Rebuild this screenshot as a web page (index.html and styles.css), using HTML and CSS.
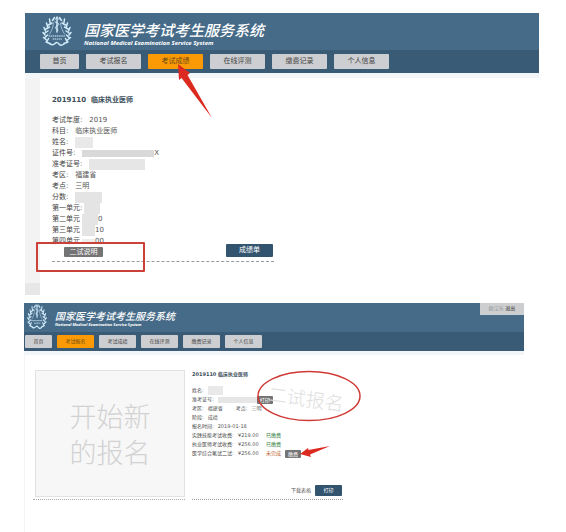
FILE: index.html
```html
<!DOCTYPE html>
<html lang="zh-CN">
<head>
	<meta charset="utf-8">
	<title>国家医学考试考生服务系统</title>
	<link rel="stylesheet" href="styles.css">
</head>
<body>
	<svg class="defs" aria-hidden="true">
		<symbol id="emblem" viewBox="0 0 30 30" preserveAspectRatio="none">
			<g fill="none" stroke="#d3ecfb" stroke-linecap="round">
				<path stroke-width="1.500" d="M12.500 1.500L10.500 4.500M7.500 3L8 6.500M10 7L6.500 9M4.500 7L5.500 10.500M7.500 11L4 13M2 11.500L3.500 15M6 15L3 17M1 16.500L3 19M5.500 19L3 21.500M1.500 21.500L4.500 24M6.500 22.500L5 25.500M4 26L8 27.500"/>
				<path stroke-width="1.500" d="M17.500 1.500L19.500 4.500M22.500 3L22 6.500M20 7L23.500 9M25.500 7L24.500 10.500M22.500 11L26 13M28 11.500L26.500 15M24 15L27 17M29 16.500L27 19M24.500 19L27 21.500M28.500 21.500L25.500 24M23.500 22.500L25 25.500M26 26L22 27.500"/>
				<path stroke-width="1.500" d="M15 1V16"/>
				<path stroke-width="1" d="M13 3.500L15 1.500L17 3.500M13 6C18 7 17.500 9 15 10S13 12.500 16 14"/>
				<path stroke-width="0.600" d="M11.500 7C11 12 9.500 15 7.500 18M18.500 7C19 12 20.500 15 22.500 18"/>
				<path stroke-width="1" stroke-dasharray="0.800 1.300" d="M7 20H23.500M11 23H19.500"/>
				<path stroke-width="1.500" d="M8 28Q11 29.500 13 27.500T17 28T22 28"/>
			</g>
		</symbol>
	</svg>

	<section class="shot shot-score">
		<header class="banner">
			<svg class="logo" role="img" aria-label="徽标"><use href="#emblem"/></svg>
			<div class="brand">
				<div class="brand-name">国家医学考试考生服务系统</div>
				<div class="brand-en">National Medical Examination Service System</div>
			</div>
		</header>
		<nav class="menu">
			<a class="home" href="#">首页</a>
			<a href="#">考试报名</a>
			<a class="active" href="#">考试成绩</a>
			<a href="#">在线评测</a>
			<a href="#">缴费记录</a>
			<a href="#">个人信息</a>
		</nav>
		<div class="content">
			<div class="gutter"></div>
			<div class="record">
				<h2>2019110&nbsp; 临床执业医师</h2>
				<dl>
					<div><dt>考试年度:</dt><dd>2019</dd></div>
					<div><dt>科目:</dt><dd>临床执业医师</dd></div>
					<div><dt>姓名:</dt><dd><span class="mask mask-name"></span></dd></div>
					<div><dt>证件号:</dt><dd><span class="mask mask-id"></span>X</dd></div>
					<div><dt>准考证号:</dt><dd><span class="mask mask-ticket"></span></dd></div>
					<div><dt>考区:</dt><dd>福建省</dd></div>
					<div><dt>考点:</dt><dd>三明</dd></div>
					<div><dt>分数:</dt><dd><span class="mask mask-total"></span></dd></div>
					<div class="unit"><dt>第一单元:</dt><dd><span class="mask"></span></dd></div>
					<div class="unit"><dt>第二单元</dt><dd><span class="mask"></span>0</dd></div>
					<div class="unit"><dt>第三单元</dt><dd><span class="mask mask-short"></span>10</dd></div>
					<div class="unit"><dt>第四单元</dt><dd><span class="mask mask-short mask-faint"></span>00</dd></div>
				</dl>
				<div class="actions">
					<button type="button" class="tag">二试说明</button>
					<button type="button" class="primary">成绩单</button>
				</div>
			</div>
		</div>
		<div class="mark-box"></div>
		<svg class="mark-arrow" viewBox="0 0 36 56" aria-hidden="true">
			<path fill="#dd2a20" d="M1 1L13 10L10.500 12L35 55L4.500 15L2 17Z"/>
		</svg>
	</section>

	<section class="shot shot-apply">
		<header class="banner">
			<svg class="logo" role="img" aria-label="徽标"><use href="#emblem"/></svg>
			<div class="brand">
				<div class="brand-name">国家医学考试考生服务系统</div>
				<div class="brand-en">National Medical Examination Service System</div>
			</div>
			<div class="user"><span class="user-name">欧宝乐</span> <a href="#">退出</a></div>
		</header>
		<nav class="menu">
			<a class="home" href="#">首页</a>
			<a class="active" href="#">考试报名</a>
			<a href="#">考试成绩</a>
			<a href="#">在线评测</a>
			<a href="#">缴费记录</a>
			<a href="#">个人信息</a>
		</nav>
		<div class="content">
			<div class="new-entry">
				<button type="button" class="new-card">开始新<br>的报名</button>
			</div>
			<div class="record">
				<h2>2019110 临床执业医师</h2>
				<dl>
					<div><dt>姓名:</dt><dd><span class="mask mask-name"></span></dd></div>
					<div><dt>准考证号:</dt><dd><span class="mask mask-ticket"></span><button type="button" class="tag">打印</button></dd></div>
					<div><dt>考区:</dt><dd class="area">福建省</dd><dt>考点:</dt><dd>三明</dd></div>
					<div><dt>阶段:</dt><dd>成绩</dd></div>
					<div><dt>报名时间:</dt><dd>2019-01-18</dd></div>
					<div class="fee"><dt>实践技能考试收费:</dt><dd>¥219.00</dd><dd class="paid">已缴费</dd></div>
					<div class="fee"><dt>执业医师考试收费:</dt><dd>¥256.00</dd><dd class="paid">已缴费</dd></div>
					<div class="fee"><dt>医学综合笔试二试:</dt><dd>¥256.00</dd><dd class="unpaid">未完成</dd><dd><button type="button" class="tag">缴费</button></dd></div>
				</dl>
				<div class="actions">
					<a href="#">下载表格</a>
					<button type="button" class="primary">打印</button>
				</div>
			</div>
		</div>
		<div class="stamp">二试报名</div>
		<svg class="mark-ring" viewBox="0 0 104 52" aria-hidden="true">
			<ellipse cx="52" cy="26" rx="51" ry="24.500" fill="none" stroke="#cf3a35" stroke-width="1.500"/>
		</svg>
		<svg class="mark-arrow" viewBox="0 0 32 14" aria-hidden="true">
			<path fill="#dd2a20" d="M1 9L9 3L9.500 5L31 1L11 9.500L12 12Z"/>
		</svg>
	</section>
</body>
</html>
```

FILE: styles.css
```css
* {
	box-sizing: border-box;
}

body {
	margin: 0;
	padding: 13px 0 0;
	background: #fff;
	color: #555;
	font-family: "DejaVu Sans", "Noto Sans CJK SC", sans-serif;
}

a {
	color: inherit;
	text-decoration: none;
}

button {
	margin: 0;
	padding: 0;
	border: 0;
	font: inherit;
	text-align: center;
}

h2, dl, dd {
	margin: 0;
}

.defs {
	display: none;
}

.shot {
	position: relative;
}

.shot-score {
	margin: 0 27px 8px 25px;
	font-size: 7px;
	line-height: 11px;
}

.shot-apply {
	margin: 0 42px 0 24px;
	font-size: 5px;
	line-height: 9px;
}

/* header */
.banner {
	display: flex;
	background: #466b88;
	color: #fff;
}

.shot-score .banner {
	height: 37px;
	padding: 3px 0 0 17px;
	gap: 12px;
}

.shot-apply .banner {
	height: 29px;
	padding: 1px 0 0 3px;
	gap: 8px;
}

.shot-score .logo {
	width: 30px;
	height: 30px;
}

.shot-apply .logo {
	width: 20px;
	height: 25px;
}

.brand {
	font-style: italic;
	white-space: nowrap;
}

.brand-name {
	font-family: "Noto Sans CJK SC", sans-serif;
	font-weight: 500;
}

.brand-en {
	font-family: "Open Sans", sans-serif;
	font-weight: 700;
}

.shot-score .brand-name {
	padding-top: 5px;
	font-size: 15px;
	line-height: 18px;
}

.shot-score .brand-en {
	font-size: 6px;
	line-height: 8px;
}

.shot-apply .brand-name {
	padding-top: 6px;
	font-size: 10px;
	line-height: 12px;
}

.shot-apply .brand-en {
	font-size: 4px;
	line-height: 6px;
}

.user {
	width: 44px;
	height: 12px;
	margin: -1px 0 0 auto;
	background: #ccced0;
	color: #333;
	line-height: 11px;
	text-align: center;
}

.user-name {
	color: #999;
}

/* menu */
.menu {
	display: flex;
	background: #3a5b76;
}

.menu a {
	border-radius: 1px;
	background: #cdced1;
	color: #444;
	text-align: center;
}

.menu .active {
	background: #fb9a05;
	color: #6b4a14;
}

.shot-score .menu {
	gap: 7px;
	padding: 4px 15px;
}

.shot-score .menu a {
	width: 55px;
	line-height: 15px;
}

.shot-score .menu .home {
	width: 39px;
}

.shot-apply .menu {
	gap: 5px;
	padding: 3px 1px;
}

.shot-apply .menu a {
	width: 37px;
	line-height: 13px;
}

.shot-apply .menu .home {
	width: 27px;
}

/* content */
.content {
	display: flex;
	border-top: 5px solid #f3f6f8;
}

.gutter {
	width: 15px;
	border-bottom: 12px solid #e7e7e8;
	background: #f3f3f4;
}

.record {
	display: flex;
	flex-direction: column;
}

.record h2 {
	color: #3d4f5c;
	font-size: inherit;
	font-weight: bold;
}

.record dl > div {
	display: flex;
	white-space: nowrap;
}

.record dt {
	color: #444;
}

.record dd {
	display: flex;
	align-items: center;
}

.shot-score .record {
	width: 222px;
	margin: 17px 0 33px 12px;
	border-bottom: 1px dashed #999;
}

.shot-score dl {
	margin-top: 9px;
}

.shot-score dl > div {
	gap: 7px;
	height: 11px;
}

.shot-score dl > .unit {
	gap: 2px;
}

.actions {
	display: flex;
	align-items: flex-end;
	justify-content: space-between;
}

.shot-score .actions {
	margin-top: -3px;
	padding: 0 1px 4px 12px;
}

.tag {
	border-radius: 1px;
	background: #747474;
	color: #fff;
}

.primary {
	border-radius: 1px;
	background: #32546f;
	color: #fff;
}

.shot-score .tag {
	width: 39px;
	line-height: 10px;
}

.shot-score .primary {
	width: 47px;
	line-height: 13px;
}

/* hidden personal data */
.mask {
	width: 16px;
	height: 11px;
	background: #e4e4e4;
}

.mask-name {
	width: 18px;
	background: #e9e9e9;
}

.mask-id {
	width: 72px;
	height: 7px;
	background: #d9d9d9;
}

.mask-ticket {
	width: 56px;
	background: #e6e6e6;
}

.mask-total {
	width: 27px;
}

.mask-short {
	width: 13px;
}

.mask-faint {
	height: 5px;
	background: #ededed;
}

/* registration page */
.shot-apply .content {
	gap: 7px;
	min-height: 181px;
	padding: 15px 0 32px 9px;
	border-top-width: 4px;
	box-shadow: inset 1px 0 #f3f4f5;
}

.new-entry {
	width: 152px;
	padding: 0 0 2px 2px;
	border-bottom: 1px dotted #aaa;
}

.new-card {
	width: 100%;
	height: 127px;
	border: 1px solid #e1e1e1;
	background: #f7f7f7;
	color: #d2d2d2;
	font-family: "Noto Sans CJK SC", sans-serif;
	font-size: 27px;
	font-weight: 300;
	line-height: 36px;
}

.shot-apply .record {
	width: 151px;
	border-bottom: 1px dotted #999;
}

.shot-apply dl {
	margin-top: 7px;
}

.shot-apply dl > div {
	gap: 4px;
	height: 9px;
}

.shot-apply .area {
	margin-right: 9px;
}

.shot-apply .mask-name {
	width: 15px;
	height: 9px;
}

.shot-apply .mask-ticket {
	width: 39px;
	height: 6px;
}

.shot-apply dl > .fee {
	display: grid;
	grid-template-columns: 42px 24px 15px 16px;
}

.record .paid {
	color: #2e7a35;
}

.record .unpaid {
	color: #b85a1c;
}

.shot-apply .tag {
	width: 16px;
	line-height: 8px;
}

.shot-apply .actions {
	align-items: center;
	justify-content: flex-end;
	gap: 4px;
	margin-top: auto;
	padding: 0 1px 3px 0;
}

.shot-apply .primary {
	width: 27px;
	line-height: 11px;
}

/* red marks drawn over the pages */
.mark-box {
	position: absolute;
	top: 229px;
	left: 11px;
	width: 109px;
	height: 30px;
	border: 2px solid #cb4039;
	border-radius: 1px;
}

.shot-score .mark-arrow {
	position: absolute;
	top: 50px;
	left: 152px;
	width: 36px;
	height: 56px;
}

.stamp {
	position: absolute;
	top: 83px;
	left: 244px;
	color: #dedede;
	font-family: "Noto Sans CJK SC", sans-serif;
	font-size: 19px;
	font-weight: 300;
	line-height: 24px;
	transform: rotate(8deg);
}

.mark-ring {
	position: absolute;
	top: 67px;
	left: 233px;
	width: 104px;
	height: 52px;
}

.shot-apply .mark-arrow {
	position: absolute;
	top: 142px;
	left: 275px;
	width: 32px;
	height: 14px;
}
```
